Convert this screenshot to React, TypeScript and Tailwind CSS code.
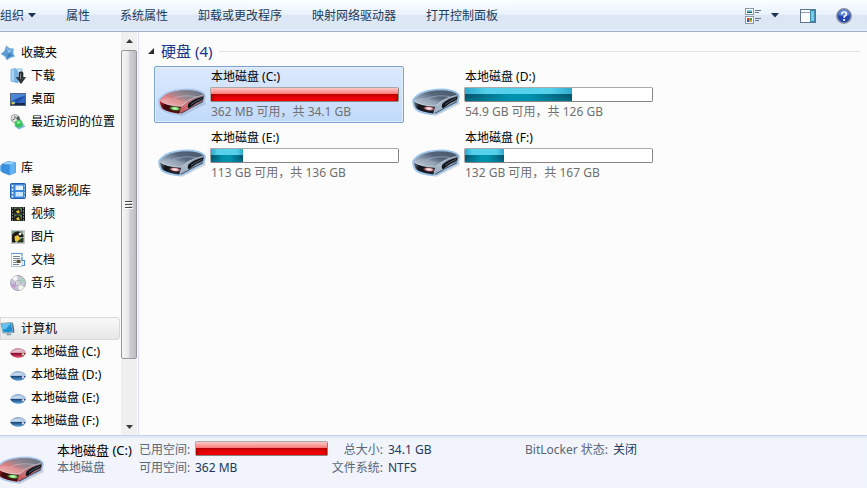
import { useId, useState } from "react";
import type { ReactNode } from "react";
import clsx from "clsx";

type Tone = "red" | "blue";

type Drive = {
  name: string;
  info: string;
  used: number;
  tone: Tone;
};

const drives: Drive[] = [
  { name: "本地磁盘 (C:)", info: "362 MB 可用，共 34.1 GB", used: 100, tone: "red" },
  { name: "本地磁盘 (D:)", info: "54.9 GB 可用，共 126 GB", used: 57, tone: "blue" },
  { name: "本地磁盘 (E:)", info: "113 GB 可用，共 136 GB", used: 17, tone: "blue" },
  { name: "本地磁盘 (F:)", info: "132 GB 可用，共 167 GB", used: 21, tone: "blue" },
];

const DriveIcon = ({ tone }: { tone: Tone }) => {
  const id = useId();
  const red = tone === "red";
  return (
    <svg viewBox="0 0 48 28" className="h-7 w-12 shrink-0" aria-hidden="true">
      <defs>
        <linearGradient id={`${id}t`} x1="0" y1="0.8" x2="0.9" y2="0.1">
          <stop offset="0" stopColor={red ? "#f0a3a3" : "#aebccc"} />
          <stop offset="0.35" stopColor={red ? "#d87f82" : "#8192a6"} />
          <stop offset="0.6" stopColor={red ? "#97868f" : "#56677b"} />
          <stop offset="1" stopColor={red ? "#6c7686" : "#4b5a6d"} />
        </linearGradient>
        <linearGradient id={`${id}s`} x1="0" y1="1" x2="1" y2="0">
          <stop offset="0" stopColor={red ? "#c23034" : "#93a3b6"} />
          <stop offset="0.5" stopColor={red ? "#c9747a" : "#a9b8c9"} />
          <stop offset="1" stopColor="#5b6a7e" />
        </linearGradient>
        <linearGradient id={`${id}f`} x1="0" y1="0" x2="1" y2="0.2">
          <stop offset="0" stopColor={red ? "#c22226" : "#6d7b8c"} />
          <stop offset="0.3" stopColor={red ? "#3a090b" : "#12161c"} />
          <stop offset="1" stopColor={red ? "#4a1114" : "#1c222b"} />
        </linearGradient>
        <radialGradient id={`${id}g`}>
          <stop offset="0" stopColor={red ? "#f2ffe8" : "#ffffff"} />
          <stop offset="0.5" stopColor={red ? "#77d868" : "#e5a8ae"} />
          <stop offset="1" stopColor={red ? "#2a7a20" : "#8e1a28"} stopOpacity="0" />
        </radialGradient>
      </defs>
      <path d="M10 25 24 28 48 16 46 12Z" fill="#000" opacity="0.13" />
      <path
        d="M1 12.500Q2 9.500 8 5.500Q15 2 25 1.500Q34 1 40 2.800Q45 4.200 46.800 6.800Q47.500 10 45.500 14.500Q38 18 29 23.500Q24 26.800 19 26.200Q9 25 4 21.500Q1 18 1 12.500Z"
        fill={`url(#${id}s)`}
        stroke={red ? "#a9c6ea" : "#9cc5ee"}
        strokeWidth="1.600"
      />
      <path d="M2 13.500Q7 17.500 23.500 18Q21.500 22 21.500 25.500Q11 24.500 5 20.800Q2.500 18 2 13.500Z" fill={`url(#${id}f)`} />
      <path
        d="M2 12.500Q4 9 9 6.300Q16 3 25 2.500Q33 2 39.500 3.800Q43.500 5 45.500 7Q35 9.500 29.500 13Q26 16.500 23.500 18.500Q9 18 2 12.500Z"
        fill={`url(#${id}t)`}
      />
      <path d="M2 12.500Q9 8.500 17 11Q24 13 29.500 13Q26 16.500 23.500 18.500Q9 18 2 12.500Z" fill="#fff" opacity="0.15" />
      <path d="M2.500 13Q9 18 23 18.300Q26 16.500 29.500 13Q35 9.500 45 7.200" fill="none" stroke="#e3edf8" strokeWidth="0.700" opacity="0.75" />
      <path d="M15 10.500Q24 6.500 38 8.500" fill="none" stroke="#dce8f5" strokeWidth="0.600" opacity="0.6" />
      <path d="M30.500 15.500Q36 10.500 45.500 8.500L44.500 12Q37.500 14.500 31.500 20Q28.500 20 30.500 15.500Z" fill="#0f131a" />
      <path d="M33 16.500Q38 12.500 44 10.500" fill="none" stroke="#6d7c8f" strokeWidth="0.700" />
      <path d="M23 25.300Q33 19.500 44.800 13.800" fill="none" stroke="#2d3744" strokeWidth="0.800" />
      <ellipse cx="17" cy="20.500" rx="6.500" ry="2.500" fill={`url(#${id}g)`} transform="rotate(6 17 20.500)" />
    </svg>
  );
};

const MiniDrive = ({ tone }: { tone: Tone }) => {
  const id = useId();
  const red = tone === "red";
  return (
    <svg viewBox="0 0 16 16" className="size-4">
      <defs>
        <linearGradient id={id} x1="0" y1="0" x2="0" y2="1">
          <stop offset="0" stopColor={red ? "#c58aa0" : "#86a5c8"} />
          <stop offset="0.45" stopColor={red ? "#e2b3c4" : "#c0d8ef"} />
          <stop offset="0.55" stopColor={red ? "#8d0c30" : "#1b4777"} />
          <stop offset="1" stopColor={red ? "#e0516f" : "#5fa6e0"} />
        </linearGradient>
      </defs>
      <path d="M0 8.500Q2.500 4 8.500 4Q14 4.500 16 7.500Q16 10.500 13.500 12.500Q9 14.500 5 13.200Q1 12 0 8.500Z" fill={`url(#${id})`} />
      <path d="M2.500 7.500Q8 4 13 6.300Q9 8.200 2.500 7.500Z" fill="#fff" opacity="0.35" />
      <circle cx="13" cy="10.200" r="1.200" fill={red ? "#a5e591" : "#ecd3da"} />
    </svg>
  );
};

const StarIcon = () => (
  <svg viewBox="0 0 16 16" className="size-4">
    <path d="M6.500.8 9.500 3.500 13.500 3.800 13 8 14.500 11.500 10.500 12.500 7 15 5 11.500 1 9 4.500 6Z" fill="#5b9bd3" stroke="#8fbce2" strokeWidth="0.800" strokeLinejoin="round" />
    <path d="M7 2 9 5 13 4.500 8 8.500Z" fill="#8fc3ed" />
    <path d="M8 8 13.500 11 9.500 11.500 7 14Z" fill="#3f7fbd" />
  </svg>
);

const DownloadIcon = () => (
  <svg viewBox="0 0 16 16" className="size-4">
    <path d="M1 1.500 5 .5V14L1 13Z" fill="#a5d4f5" stroke="#5d9ccc" strokeWidth="0.700" />
    <path d="M5 1H12V14H5Z" fill="#d3ebfb" stroke="#6aa7d6" strokeWidth="0.700" />
    <path d="M5 .5 8 2.500V15.500L5 14Z" fill="#75b4e6" />
    <path d="M9 4.500Q11 2.800 13 4.500V9.500H15.500L11 15.500 6.500 9.500H9Z" fill="#33373c" stroke="#111" strokeWidth="0.600" />
    <path d="M10.500 5.500V11" stroke="#8b9096" strokeWidth="0.800" />
  </svg>
);

const DesktopIcon = () => (
  <svg viewBox="0 0 16 16" className="size-4">
    <rect x="0.500" y="2.500" width="15" height="12" fill="#1f4ea3" stroke="#57677d" />
    <path d="M1 3H15V5Q8 6 1 11Z" fill="#4b86d8" />
    <path d="M7 12 15 5V12Z" fill="#2d66c4" />
    <rect x="1" y="12" width="14" height="2" fill="#18294a" />
    <circle cx="3" cy="12.200" r="1.400" fill="#f0c946" />
    <circle cx="4.500" cy="11.500" r="1" fill="#58c1f0" />
  </svg>
);

const RecentIcon = () => (
  <svg viewBox="0 0 16 16" className="size-4">
    <path d="M4 12 12 9 15.500 12.500 9 15.500Z" fill="#86b9e2" />
    <circle cx="5" cy="4.500" r="4" fill="#dfe2e0" stroke="#8e938f" strokeWidth="0.800" />
    <path d="M5 4.500V2M5 4.500 2.500 6" stroke="#444" strokeWidth="0.800" />
    <path d="M6 3.500 9 2 10.500 6 7 6Z" fill="#5c6360" />
    <path d="M4.500 8.500Q8 4.500 11.500 6.500L13 10Q12 14 8 13.500Q4.500 12.500 4.500 8.500Z" fill="#35c157" />
    <path d="M6.500 8Q9 6 11 8Q10 10 7.500 10Z" fill="#92eaa0" />
  </svg>
);

const LibraryIcon = () => (
  <svg viewBox="0 0 16 16" className="size-4">
    <path d="M0 5.500 5 3V13L0 11Z" fill="#6ab4ef" />
    <path d="M2 4 8 1.500 15.500 2.500V12.500L9.500 15 2 12Z" fill="#3a8fe0" stroke="#2b74bd" strokeWidth="0.600" />
    <path d="M10 4.500 15.500 2.500V12.500L9.500 15Z" fill="#62b3f2" />
    <path d="M2 4 8 1.500 15.500 2.500 10 4.500Z" fill="#9bd2f9" />
  </svg>
);

const StormVideoIcon = () => (
  <svg viewBox="0 0 16 16" className="size-4">
    <rect x="0.500" y="0.500" width="15" height="15" rx="1" fill="#3e87db" stroke="#1f5fb0" />
    <rect x="5.500" y="2.500" width="7.500" height="4.500" fill="#e4f3ff" />
    <rect x="5.500" y="9" width="7.500" height="4.500" fill="#cde6fc" />
    <path d="M2.500 2V15" stroke="#e9f5ff" strokeWidth="1.500" strokeDasharray="2 1.500" />
    <path d="M14.500 2V15" stroke="#a7d0f7" strokeWidth="0.800" strokeDasharray="2 1.500" />
  </svg>
);

const VideoIcon = () => (
  <svg viewBox="0 0 16 16" className="size-4">
    <rect x="1" y="1" width="14" height="14" fill="#17181a" />
    <rect x="4" y="1.500" width="8" height="6" fill="#587a4a" />
    <rect x="4" y="8.500" width="8" height="6" fill="#587a4a" />
    <path d="M4 4Q7 1 10 3L12 7.500H4Z" fill="#23221c" />
    <path d="M4 11Q7 8 10 10L12 14.500H4Z" fill="#23221c" />
    <path d="M6 5.500 8.500 4 10 6.500 7.500 7.200Z M6 12.500 8.500 11 10 13.500 7.500 14.200Z" fill="#e8c63d" />
    <path d="M2.500 1.500V15M13.500 1.500V15" stroke="#e0e0e0" strokeDasharray="1 2" />
  </svg>
);

const PictureIcon = () => (
  <svg viewBox="0 0 16 16" className="size-4">
    <rect x="1.500" y="1.500" width="13" height="13" fill="#fff" stroke="#c9c9c9" />
    <rect x="2" y="2" width="11.500" height="11.500" fill="#7fa58e" />
    <path d="M2 6Q4 2 9 2.500L13.500 6V8L9 8 5 13.500H2Z" fill="#1d1c18" />
    <path d="M4.500 7.500 8 6 10 9.500 8 12H5Z" fill="#f0c534" />
    <path d="M9 11 13.500 8.500V13.500H7Z" fill="#2c3620" />
    <circle cx="10" cy="5" r="1.300" fill="#f7f3e4" />
  </svg>
);

const DocumentIcon = () => (
  <svg viewBox="0 0 16 16" className="size-4">
    <rect x="1.500" y="1.500" width="10.500" height="13" fill="#fbfdff" stroke="#b9c5d1" />
    <path d="M1.500 1.500H12V4" fill="none" stroke="#5a9bd8" />
    <path d="M3 4.500H10M3 6.500H10M3 8.500H6M3 10.500H6M3 12.500H9" stroke="#6a7482" strokeWidth="0.900" />
    <rect x="6.500" y="7.800" width="4" height="3.200" fill="#5b4a38" />
    <path d="M12 5V8.500H14.500V13.500H12" fill="none" stroke="#4c8fd2" strokeWidth="1.200" />
  </svg>
);

const MusicIcon = () => (
  <svg viewBox="0 0 16 16" className="size-4">
    <circle cx="8" cy="8" r="7.500" fill="#c6c7d2" stroke="#97989f" strokeWidth="0.800" />
    <path d="M8 8 2 3.500A7.500 7.500 0 0 1 7 .8Z" fill="#f5f5fa" />
    <path d="M8 8 14 12.500A7.500 7.500 0 0 1 9 15.200Z" fill="#f3f6ee" />
    <path d="M8 8 .8 9A7.500 7.500 0 0 0 4 14Z" fill="#c19fd3" />
    <path d="M8 8 15 7A7.500 7.500 0 0 0 12 2Z" fill="#a6d3bb" />
    <circle cx="8" cy="8" r="2.600" fill="#ececf2" stroke="#8b8c95" strokeWidth="0.600" />
    <circle cx="8" cy="8" r="1" fill="#fff" stroke="#888" strokeWidth="0.500" />
  </svg>
);

const ComputerIcon = () => (
  <svg viewBox="0 0 16 16" className="size-4">
    <path d="M1 2.500 11.500 1.500 13.500 11.500 3 12Z" fill="#d7e2eb" stroke="#5f7a8e" strokeWidth="0.700" />
    <path d="M1.800 3.300 11 2.300 12.700 10.700 3.500 11.200Z" fill="#1a90d4" />
    <path d="M1.800 3.300 11 2.300 6 8 2.800 8.500Z" fill="#5fc2f2" />
    <path d="M6 12.300 10 12.300 12 14 7 14.500Z" fill="#8ea3b3" />
    <path d="M12 1.800 13 2 14.500 11.500 13.500 11.500Z" fill="#3f5a6e" />
  </svg>
);

const ViewIcon = () => (
  <svg viewBox="0 0 16 16" className="size-4">
    <rect x="0.500" y="0.500" width="8" height="6" fill="#fff" stroke="#8b98aa" />
    <rect x="2" y="2" width="5" height="1.500" fill="#7dd2f0" />
    <rect x="2" y="3.500" width="5" height="1.500" fill="#1f5c62" />
    <rect x="0.500" y="8.500" width="8" height="7" fill="#fff" stroke="#8b98aa" />
    <path d="M2 10H4.500V12H2Z" fill="#d6402b" />
    <path d="M4.500 10H7V12H4.500Z" fill="#45a342" />
    <path d="M2 12H4.500V14H2Z" fill="#3451b5" />
    <path d="M4.500 12H7V14H4.500Z" fill="#d8a52a" />
    <path d="M10 2.500H16M10 4.500H14M10 10.500H16M10 12.500H14" stroke="#64748b" />
  </svg>
);

const PaneIcon = () => (
  <svg viewBox="0 0 16 14" className="h-3.5 w-4">
    <rect x="0.500" y="0.500" width="15" height="13" fill="#fff" stroke="#5b7792" />
    <path d="M1 3.500H10" stroke="#8fa5ba" />
    <rect x="10.500" y="1.500" width="4" height="11" fill="#79cbe4" stroke="#3f86a8" />
  </svg>
);

const HelpIcon = () => (
  <svg viewBox="0 0 16 16" className="size-4">
    <circle cx="8" cy="8" r="7.200" fill="#2548b0" stroke="#8d949f" strokeWidth="1.500" />
    <path d="M2.500 7A5.500 5.500 0 0 1 13.500 7Q8 9 2.500 7Z" fill="#5f86dd" />
    <path d="M5.800 6.200Q5.800 4 8 4Q10.400 4 10.400 6Q10.400 7.200 9 8Q8.100 8.600 8.100 9.700" fill="none" stroke="#fff" strokeWidth="1.700" />
    <circle cx="8.100" cy="12" r="1.100" fill="#fff" />
  </svg>
);

const Caret = () => (
  <svg viewBox="0 0 8 5" className="h-[5px] w-2" aria-hidden="true">
    <path d="M0 0H8L4 4.500Z" fill="#1e3256" />
  </svg>
);

const UsageBar = ({ used, tone, label }: { used: number; tone: Tone; label: string }) => (
  <div
    role="progressbar"
    aria-label={label}
    aria-valuenow={used}
    aria-valuemin={0}
    aria-valuemax={100}
    className="h-[15px] w-full rounded-xs border border-[#a9a9a9] border-r-[#858585] border-b-[#858585] bg-white"
  >
    <div className="flex h-full flex-col" style={{ width: `${used}%` }}>
      <div
        className={clsx(
          "h-1.5",
          tone === "red"
            ? "bg-linear-to-b from-[#ffc6c6] to-[#f57878]"
            : "bg-[linear-gradient(90deg,#2fa9c9_0%,#57d0ec_20%,#57d0ec_80%,#2fa9c9_100%)]",
        )}
      />
      <div
        className={clsx(
          "grow",
          tone === "red"
            ? "bg-[linear-gradient(90deg,#b00000_0px,transparent_5px,transparent_98%,#b00000_100%),linear-gradient(180deg,#b80000_0%,#ee0000_60%,#f00000_100%)]"
            : "bg-[linear-gradient(180deg,transparent_40%,#0090ac66_100%),linear-gradient(90deg,#04546c_0%,#0092ad_40%,#0092ad_60%,#04546c_100%)]",
        )}
      />
    </div>
  </div>
);

type NavItem = { label: string; icon: ReactNode };

const navGroups: { head: NavItem; active?: boolean; items: NavItem[] }[] = [
  {
    head: { label: "收藏夹", icon: <StarIcon /> },
    items: [
      { label: "下载", icon: <DownloadIcon /> },
      { label: "桌面", icon: <DesktopIcon /> },
      { label: "最近访问的位置", icon: <RecentIcon /> },
    ],
  },
  {
    head: { label: "库", icon: <LibraryIcon /> },
    items: [
      { label: "暴风影视库", icon: <StormVideoIcon /> },
      { label: "视频", icon: <VideoIcon /> },
      { label: "图片", icon: <PictureIcon /> },
      { label: "文档", icon: <DocumentIcon /> },
      { label: "音乐", icon: <MusicIcon /> },
    ],
  },
  {
    head: { label: "计算机", icon: <ComputerIcon /> },
    active: true,
    items: drives.map((d) => ({ label: d.name, icon: <MiniDrive tone={d.tone} /> })),
  },
];

const Toolbar = () => (
  <header className="flex h-8 items-center justify-between border-b border-[#a0b0cb] bg-[linear-gradient(180deg,#fbfeff_0%,#e9f3fc_46%,#dce6f4_50%,#dde8f6_92%,#e8f2fc_100%)] pr-[15px] text-[#1e395b]">
    <div className="flex items-center gap-[30px]">
      <button className="flex items-center gap-1">
        组织
        <Caret />
      </button>
      {["属性", "系统属性", "卸载或更改程序", "映射网络驱动器", "打开控制面板"].map((label) => (
        <button key={label}>{label}</button>
      ))}
    </div>
    <div className="flex items-center gap-5">
      <button aria-label="更改您的视图" className="mr-px flex items-center gap-2.5">
        <ViewIcon />
        <Caret />
      </button>
      <button aria-label="显示预览窗格">
        <PaneIcon />
      </button>
      <button aria-label="获取帮助">
        <HelpIcon />
      </button>
    </div>
  </header>
);

const Sidebar = () => (
  <nav className="flex w-[121px] shrink-0 flex-col gap-[23px] pt-[9px] pb-[3px] whitespace-nowrap">
    {navGroups.map(({ head, active, items }) => (
      <ul key={head.label}>
        <li>
          <a
            href="#"
            className={clsx(
              "mr-px flex h-[23px] items-center gap-[5px]",
              active &&
                "rounded-r-sm bg-linear-to-b from-[#fafafa] to-[#e6e6e6] shadow-[inset_0_0_0_1px_#d9d9d9]",
            )}
          >
            {head.icon}
            {head.label}
          </a>
        </li>
        {items.map(({ label, icon }) => (
          <li key={label}>
            <a href="#" className="flex h-[23px] items-center gap-[5px] pl-2.5">
              {icon}
              {label}
            </a>
          </li>
        ))}
      </ul>
    ))}
  </nav>
);

const Scrollbar = () => (
  <div className="mr-px flex w-4 shrink-0 flex-col bg-[#f0f0f0]">
    <button aria-label="向上滚动" className="flex h-[18px] items-center justify-center">
      <svg viewBox="0 0 7 4" className="h-1 w-[7px]">
        <path d="M0 4H7L3.500 0Z" fill="#3c3c3c" />
      </svg>
    </button>
    <div className="flex grow items-center justify-center rounded-xs border border-[#979797] bg-[linear-gradient(90deg,#f6f6f6_0%,#e9e9eb_45%,#d0d0d4_55%,#bcbcc2_100%)]">
      <svg viewBox="0 0 8 9" className="h-[9px] w-2">
        <path d="M0 2.500H8M0 5.500H8M0 8.500H8" stroke="#fff" />
        <path d="M0 1.500H7M0 4.500H7M0 7.500H7" stroke="#4a4a4a" />
      </svg>
    </div>
    <div className="h-[59px]" />
    <button aria-label="向下滚动" className="flex h-[17px] items-center justify-center">
      <svg viewBox="0 0 7 4" className="h-1 w-[7px]">
        <path d="M0 0H7L3.500 4Z" fill="#3c3c3c" />
      </svg>
    </button>
  </div>
);

type DriveTileProps = {
  drive: Drive;
  selected: boolean;
  onSelect: () => void;
};

const DriveTile = ({ drive, selected, onSelect }: DriveTileProps) => (
  <button
    onClick={onSelect}
    aria-pressed={selected}
    className={clsx(
      "flex w-[250px] items-end gap-1 rounded-xs border py-0.5 pr-1 pl-[3px] text-left",
      selected
        ? "border-[#7da2ce] bg-linear-to-b from-[#dce9fc] to-[#c1dafb] shadow-[inset_0_0_0_1px_#e3eefd]"
        : "border-transparent",
    )}
  >
    <span className="pb-1">
      <DriveIcon tone={drive.tone} />
    </span>
    <span className="flex min-w-0 grow flex-col gap-0.5">
      <span className="pl-px leading-4 text-black">{drive.name}</span>
      <UsageBar used={drive.used} tone={drive.tone} label={drive.name} />
      <span className="pl-px leading-4 whitespace-nowrap text-[#707070]">{drive.info}</span>
    </span>
  </button>
);

const Details = () => (
  <footer className="flex h-[53px] border-t border-[#c3d5e8] bg-[#f1f4fb] pt-[5px] leading-[18px] whitespace-nowrap text-[#5a6779] shadow-[inset_0_2px_1px_#dfe9f5]">
    <div className="-ml-1 flex w-[61px] shrink-0 items-end pb-1">
      <DriveIcon tone="red" />
    </div>
    <div className="w-[82px] shrink-0">
      <p className="text-[13px] leading-[18px] text-black">本地磁盘 (C:)</p>
      <p>本地磁盘</p>
    </div>
    <dl className="grid shrink-0 grid-cols-[51px_133px] grid-rows-[18px_18px] gap-x-[5px]">
      <dt>已用空间:</dt>
      <dd>
        <UsageBar used={100} tone="red" label="已用空间" />
      </dd>
      <dt>可用空间:</dt>
      <dd className="text-[#1e395b]">362 MB</dd>
    </dl>
    <dl className="ml-[3px] grid shrink-0 grid-cols-[52px_132px] grid-rows-[18px_18px] gap-x-[5px]">
      <dt className="text-right">总大小:</dt>
      <dd className="text-[#1e395b]">34.1 GB</dd>
      <dt className="text-right">文件系统:</dt>
      <dd className="text-[#1e395b]">NTFS</dd>
    </dl>
    <dl className="ml-[5px] flex gap-[5px]">
      <dt>BitLocker 状态:</dt>
      <dd className="text-[#1e395b]">关闭</dd>
    </dl>
  </footer>
);

const App = () => {
  const [selected, setSelected] = useState("本地磁盘 (C:)");

  return (
    <div className="flex min-h-screen flex-col bg-[#fcfcfc] font-['Noto_Sans','Noto_Sans_CJK_SC',sans-serif] text-[12px] leading-4 text-black">
      <Toolbar />
      <div className="flex grow">
        <Sidebar />
        <Scrollbar />
        <main className="min-w-0 grow border-l border-[#d6e5f5] pt-[9px] pr-[7px] pl-[9px]">
          <h2 className="mb-[5px] flex h-5 items-center gap-[7px] text-[15px] leading-5 text-[#1e3287]">
            <svg viewBox="0 0 6 6" className="size-1.5" aria-hidden="true">
              <path d="M6 0V6H0Z" fill="#2b2b2b" />
            </svg>
            硬盘 (4)
            <span className="h-px grow bg-[#e2e2e2]" />
          </h2>
          <div className="flex max-w-[520px] flex-wrap gap-1 pl-1.5">
            {drives.map((drive) => (
              <DriveTile
                key={drive.name}
                drive={drive}
                selected={selected === drive.name}
                onSelect={() => setSelected(drive.name)}
              />
            ))}
          </div>
        </main>
      </div>
      <Details />
    </div>
  );
};

export default App;
